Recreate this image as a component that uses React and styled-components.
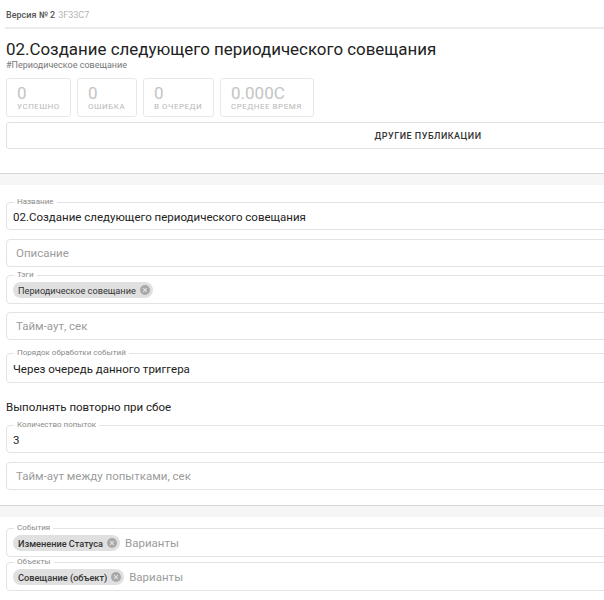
import React from "react";
import styled, { createGlobalStyle } from "styled-components";

const GlobalStyle = createGlobalStyle`
  html, body {
    margin: 0;
    padding: 0;
    overflow: hidden;
    background: #fff;
  }
  body {
    font-family: Roboto, "Noto Sans", "Liberation Sans", sans-serif;
    color: #222;
  }
`;

const Page = styled.div`
  width: 856px;
`;

const Header = styled.section`
  padding: 9px 6px 24px;
  border-bottom: 1px solid #d6d6d6;
`;

const VersionRow = styled.div`
  font-size: 9px;
  line-height: 12px;
  font-weight: 500;
  color: #555;
`;

const VersionHash = styled.span`
  font-weight: 400;
  color: #b4b4b4;
  margin-left: 3px;
`;

const Divider = styled.div`
  height: 2px;
  background: #ebebeb;
  margin: 6px 0 0 -1px;
`;

const Title = styled.h1`
  margin: 9px 0 0;
  font-size: 16.9px;
  line-height: 22px;
  font-weight: 400;
  color: #222;
`;

const HashTag = styled.div`
  font-size: 9px;
  line-height: 11px;
  color: #777;
`;

const Stats = styled.div`
  display: flex;
  gap: 6px;
  margin-top: 7px;
`;

const StatBox = styled.div`
  box-sizing: border-box;
  height: 39px;
  padding: 6px 10px 0;
  border: 1px solid #e8e8e8;
  border-radius: 3px;
  width: ${(p) => p.$w}px;
`;

const StatValue = styled.div`
  font-size: 17px;
  line-height: 17px;
  color: #c4c4c4;
`;

const StatLabel = styled.div`
  font-size: 8px;
  line-height: 10px;
  letter-spacing: 0.5px;
  text-transform: uppercase;
  color: #b8b8b8;
`;

const WideButton = styled.button`
  display: block;
  box-sizing: border-box;
  width: 100%;
  height: 27px;
  margin-top: 5px;
  background: #fff;
  border: 1px solid #e2e2e2;
  border-radius: 3px;
  font-family: inherit;
  font-size: 9px;
  font-weight: 500;
  letter-spacing: 0.5px;
  color: #333;
  text-transform: uppercase;
`;

const Band = styled.div`
  height: 11px;
  background: #f6f6f6;
`;

const Section = styled.section`
  padding: 0 6px ${(p) => p.$pb || 0}px;
  border-bottom: ${(p) => (p.$divided ? "1px solid #d6d6d6" : "none")};
`;

/* outlined input; labelled ones sit a little closer to the left edge */
const Field = styled.div`
  position: relative;
  box-sizing: border-box;
  display: flex;
  align-items: center;
  gap: 5px;
  height: ${(p) => p.$h || 28}px;
  margin-top: ${(p) => p.$mt}px;
  padding: ${(p) => (p.$label ? "1px 6px 0" : "0 9px")};
  border: 1px solid #e3e3e3;
  border-radius: 4px;
`;

const FieldLabel = styled.span`
  position: absolute;
  top: -5px;
  left: 7px;
  padding: 0 3px;
  background: #fff;
  font-size: 8px;
  line-height: 8px;
  color: #8a8a8a;
`;

const Value = styled.span`
  font-size: 11.5px;
  line-height: 14px;
  color: #222;
`;

const Placeholder = styled.span`
  font-size: 11.5px;
  line-height: 14px;
  color: #9c9c9c;
`;

const Chip = styled.span`
  display: inline-flex;
  align-items: center;
  gap: 4px;
  height: 16px;
  padding: 0 3px 0 5px;
  border-radius: 8px;
  background: #e0e0e0;
  font-size: 9.2px;
  font-weight: ${(p) => (p.$bold ? 500 : 400)};
  color: #333;
  white-space: nowrap;
`;

const SubHeading = styled.div`
  margin-top: 16px;
  font-size: 11.5px;
  line-height: 16px;
  color: #222;
`;

const CancelIcon = () => (
  <svg width="10" height="10" viewBox="0 0 10 10">
    <circle cx="5" cy="5" r="5" fill="#a8a8a8" />
    <path d="M3.2 3.2 L6.8 6.8 M6.8 3.2 L3.2 6.8" stroke="#e0e0e0" strokeWidth="1.2" />
  </svg>
);

const stats = [
  { value: "0", label: "Успешно", w: 65 },
  { value: "0", label: "Ошибка", w: 60 },
  { value: "0", label: "В очереди", w: 71 },
  { value: "0.000С", label: "Среднее время", w: 94 },
];

const App = () => {
  return (
    <Page>
      <GlobalStyle />
      <Header>
        <VersionRow>
          Версия № 2<VersionHash>3F33C7</VersionHash>
        </VersionRow>
        <Divider />
        <Title>02.Создание следующего периодического совещания</Title>
        <HashTag>#Периодическое совещание</HashTag>
        <Stats>
          {stats.map((s) => (
            <StatBox key={s.label} $w={s.w}>
              <StatValue>{s.value}</StatValue>
              <StatLabel>{s.label}</StatLabel>
            </StatBox>
          ))}
        </Stats>
        <WideButton>Другие публикации</WideButton>
      </Header>
      <Band />
      <Section $pb={15} $divided>
        <Field $mt={17} $label>
          <FieldLabel>Название</FieldLabel>
          <Value>02.Создание следующего периодического совещания</Value>
        </Field>
        <Field $mt={9}>
          <Placeholder>Описание</Placeholder>
        </Field>
        <Field $mt={8} $h={29} $label>
          <FieldLabel>Тэги</FieldLabel>
          <Chip>
            Периодическое совещание
            <CancelIcon />
          </Chip>
        </Field>
        <Field $mt={8}>
          <Placeholder>Тайм-аут, сек</Placeholder>
        </Field>
        <Field $mt={13} $h={30} $label>
          <FieldLabel>Порядок обработки событий</FieldLabel>
          <Value>Через очередь данного триггера</Value>
        </Field>
        <SubHeading>Выполнять повторно при сбое</SubHeading>
        <Field $mt={10} $label>
          <FieldLabel>Количество попыток</FieldLabel>
          <Value>3</Value>
        </Field>
        <Field $mt={9}>
          <Placeholder>Тайм-аут между попытками, сек</Placeholder>
        </Field>
      </Section>
      <Band />
      <Section>
        <Field $mt={11} $h={29} $label>
          <FieldLabel>События</FieldLabel>
          <Chip $bold>
            Изменение Статуса
            <CancelIcon />
          </Chip>
          <Placeholder>Варианты</Placeholder>
        </Field>
        <Field $mt={5} $h={29} $label>
          <FieldLabel>Объекты</FieldLabel>
          <Chip $bold>
            Совещание (объект)
            <CancelIcon />
          </Chip>
          <Placeholder>Варианты</Placeholder>
        </Field>
      </Section>
    </Page>
  );
};

export default App;
